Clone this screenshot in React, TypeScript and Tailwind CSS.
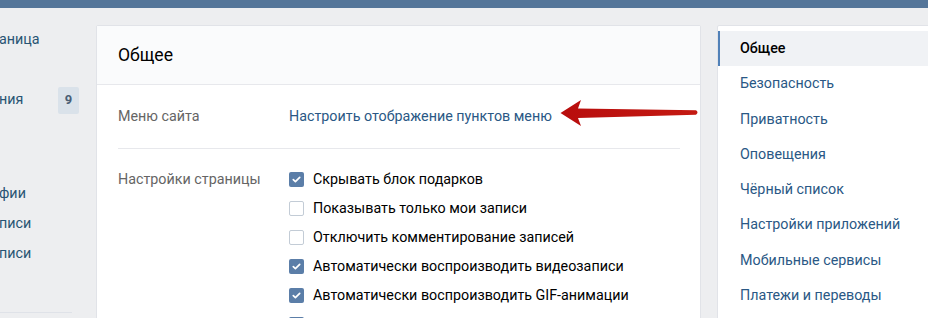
import React from "react";

const leftItems: { t: string; h: string; badge?: string }[] = [
  { t: "аница", h: "h-[30px]" },
  { t: "", h: "h-[30px]" },
  { t: "ния", h: "h-[30px]", badge: "9" },
  { t: "", h: "h-[30px]" },
  { t: "", h: "h-[34px]" },
  { t: "фии", h: "h-[30px]" },
  { t: "писи", h: "h-[30px]" },
  { t: "писи", h: "h-[30px]" },
];

const checks: { label: string; on: boolean }[] = [
  { label: "Скрывать блок подарков", on: true },
  { label: "Показывать только мои записи", on: false },
  { label: "Отключить комментирование записей", on: false },
  { label: "Автоматически воспроизводить видеозаписи", on: true },
  { label: "Автоматически воспроизводить GIF-анимации", on: true },
  { label: "", on: true },
];

const menu = [
  "Общее",
  "Безопасность",
  "Приватность",
  "Оповещения",
  "Чёрный список",
  "Настройки приложений",
  "Мобильные сервисы",
  "Платежи и переводы",
];

function Box({ on }: { on: boolean }) {
  if (on) {
    return (
      <div className="w-[15px] h-[15px] rounded-[2px] bg-[#5b7ea8] flex items-center justify-center shrink-0">
        <svg width="11" height="11" viewBox="0 0 11 11">
          <path d="M2.3 5.6 L4.4 7.6 L8.7 3.3" fill="none" stroke="#fff" strokeWidth="1.7" strokeLinecap="round" strokeLinejoin="round" />
        </svg>
      </div>
    );
  }
  return <div className="w-[15px] h-[15px] rounded-[2px] border border-[#c3ccd6] bg-white shrink-0" />;
}

export default function App() {
  return (
    <div className="relative w-[928px] h-[318px] overflow-hidden bg-[#edeef0] font-[Roboto,Arial,sans-serif] text-[14.3px]">
      <div className="h-[8px] bg-[#547599]" />
      <div className="flex pt-[17px]">
        {/* left sidebar */}
        <div className="w-[80px] shrink-0 mr-[16px] flex flex-col">
          {leftItems.map((it, i) => (
            <div key={i} className={`${it.h} flex items-center justify-between text-[#285473]`}>
              <span className="-ml-[1px]">{it.t}</span>
              {it.badge && (
                <span className="w-[21px] h-[27px] mr-[1px] bg-[#dae2ea] text-[#4a5e75] font-bold text-[13px] flex items-center justify-center rounded-[2px]">
                  {it.badge}
                </span>
              )}
            </div>
          ))}
          <div className="mt-[43px] h-px w-[72px] bg-[#dfe2e8]" />
        </div>

        {/* main card */}
        <div className="w-[605px] shrink-0 h-[400px] bg-white border border-[#e1e3e8] rounded-t-[2px]">
          <div className="h-[59px] bg-[#fafbfc] border-b border-[#e7e8ec] flex items-center px-[21px] text-[17.6px] text-[#000]">
            Общее
          </div>
          <div className="px-[21px] pr-[20px]">
            <div className="h-[64px] flex items-center border-b border-[#e7e8ec]">
              <div className="w-[171px] text-[#656565]">Меню сайта</div>
              <div className="text-[#2a5885]">Настроить отображение пунктов меню</div>
            </div>
            <div className="flex pt-[16px]">
              <div className="w-[171px] h-[29px] flex items-center text-[#656565]">Настройки страницы</div>
              <div className="flex flex-col">
                {checks.map((c, i) => (
                  <div key={i} className="h-[29px] flex items-center gap-[9px] text-[#000]">
                    <Box on={c.on} />
                    {c.label && <span>{c.label}</span>}
                  </div>
                ))}
              </div>
            </div>
          </div>
        </div>

        {/* right menu */}
        <div className="ml-[16px] w-[240px] shrink-0 h-[400px] bg-white border border-[#e1e3e8] rounded-t-[2px] pt-[5px]">
          {menu.map((m, i) => (
            <div
              key={i}
              className={
                i === 0
                  ? "h-[35.3px] flex items-center pl-[20px] border-l-2 border-[#5181b8] bg-[#f0f2f5] font-medium text-[#000]"
                  : "h-[35.3px] flex items-center pl-[22px] text-[#2a5885]"
              }
            >
              {m}
            </div>
          ))}
        </div>
      </div>

      {/* red arrow annotation */}
      <svg className="absolute left-0 top-0 pointer-events-none" width="928" height="318" viewBox="0 0 928 318">
        <defs>
          <linearGradient id="ar" x1="0" y1="0" x2="1" y2="0">
            <stop offset="0" stopColor="#b80d0d" />
            <stop offset="1" stopColor="#c41a12" />
          </linearGradient>
        </defs>
        <path
          d="M560.5 113 L581 100 L578 108.5 L696 110.3 Q699 112.5 696 114.7 L578 118 L581 126 Z"
          fill="url(#ar)"
        />
      </svg>
    </div>
  );
}
